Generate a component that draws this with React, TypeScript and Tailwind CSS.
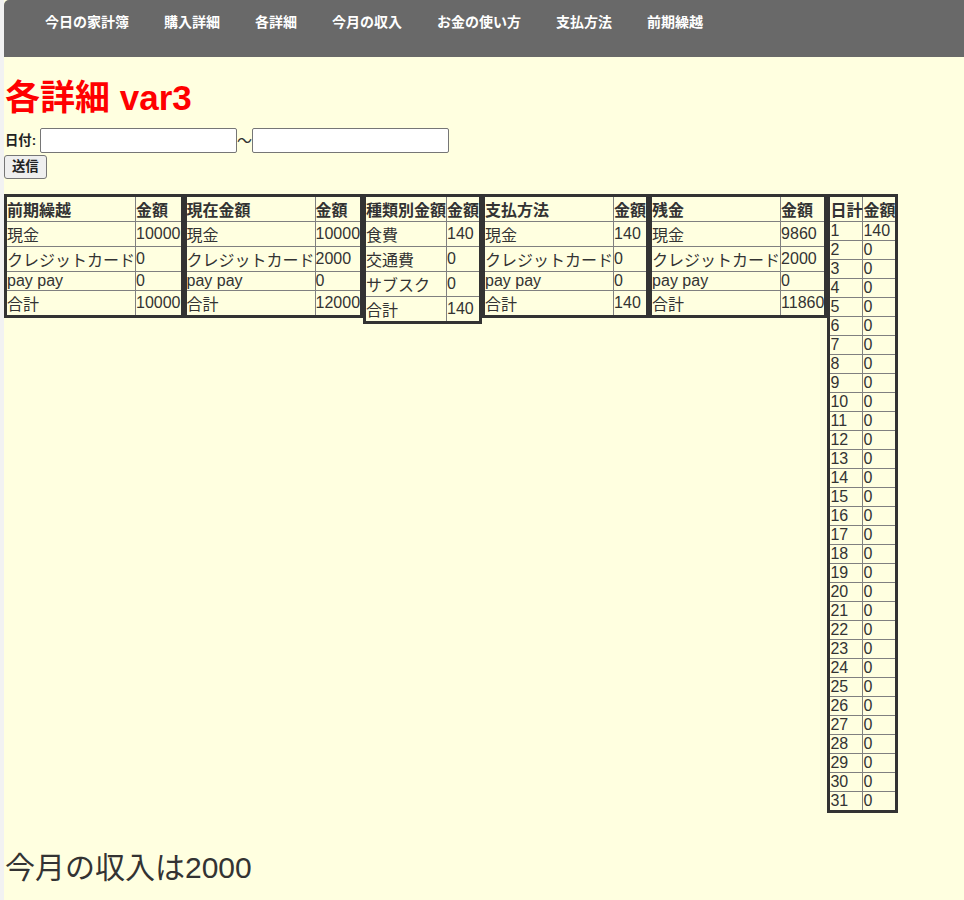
import * as React from "react";

type Row = [string, string];

interface SummaryTableProps {
  title: string;
  rows: Row[];
}

const navItems = [
  "今日の家計簿",
  "購入詳細",
  "各詳細",
  "今月の収入",
  "お金の使い方",
  "支払方法",
  "前期繰越",
];

const tables: SummaryTableProps[] = [
  {
    title: "前期繰越",
    rows: [
      ["現金", "10000"],
      ["クレジットカード", "0"],
      ["pay pay", "0"],
      ["合計", "10000"],
    ],
  },
  {
    title: "現在金額",
    rows: [
      ["現金", "10000"],
      ["クレジットカード", "2000"],
      ["pay pay", "0"],
      ["合計", "12000"],
    ],
  },
  {
    title: "種類別金額",
    rows: [
      ["食費", "140"],
      ["交通費", "0"],
      ["サブスク", "0"],
      ["合計", "140"],
    ],
  },
  {
    title: "支払方法",
    rows: [
      ["現金", "140"],
      ["クレジットカード", "0"],
      ["pay pay", "0"],
      ["合計", "140"],
    ],
  },
  {
    title: "残金",
    rows: [
      ["現金", "9860"],
      ["クレジットカード", "2000"],
      ["pay pay", "0"],
      ["合計", "11860"],
    ],
  },
];

const dailyRows: Row[] = Array.from({ length: 31 }, (_, i) => [
  String(i + 1),
  i === 0 ? "140" : "0",
]);

const cell = "border border-[#808080] p-0 text-left align-middle leading-[normal]";

const SummaryTable = ({ title, rows }: SummaryTableProps) => {
  return (
    <table className="border-collapse border-[3px] border-[#333] text-[16px] text-[#333]">
      <thead>
        <tr>
          <th className={`${cell} font-bold`}>{title}</th>
          <th className={`${cell} font-bold`}>金額</th>
        </tr>
      </thead>
      <tbody>
        {rows.map(([label, value]) => (
          <tr key={label}>
            <td className={cell}>{label}</td>
            <td className={cell}>{value}</td>
          </tr>
        ))}
      </tbody>
    </table>
  );
};

export default function App() {
  return (
    <div className="min-h-screen bg-[#f2f2f2] pl-[4px] font-['Liberation_Sans','Noto_Sans_CJK_JP',sans-serif]">
      <div className="min-h-screen bg-[#ffffe0]">
        <nav className="h-[57px] rounded-tl-[5px] bg-[#696969]">
          <ul className="flex gap-[35px] pl-[41px] pt-[12px]">
            {navItems.map((item) => (
              <li
                key={item}
                className="text-[14px] font-bold leading-[20px] text-white"
              >
                {item}
              </li>
            ))}
          </ul>
        </nav>

        <h1 className="mt-[21px] pl-[1px] text-[35px] font-bold leading-[40px] text-[#ff0000]">
          各詳細 var3
        </h1>

        <form className="mt-[10px] text-[13.33px] text-[#222]">
          <div className="flex items-center">
            <label className="pl-px pr-[4px] font-bold">日付:</label>
            <input
              type="text"
              className="h-[25px] w-[197px] rounded-[2px] border border-[#767676] bg-white"
            />
            <span className="w-[15px] text-center text-[15px] leading-[20px] text-[#333]">〜</span>
            <input
              type="text"
              className="h-[25px] w-[197px] rounded-[2px] border border-[#767676] bg-white"
            />
          </div>
          <button
            type="button"
            className="mt-[2px] h-[24px] rounded-[3px] border border-[#767676] bg-[#efefef] px-[7px] font-bold leading-none text-[#222]"
          >
            送信
          </button>
        </form>

        <div className="mt-[15px] flex items-start">
          {tables.map((t) => (
            <SummaryTable key={t.title} title={t.title} rows={t.rows} />
          ))}
          <table className="border-collapse border-[3px] border-[#333] text-[16px] text-[#333]">
            <thead>
              <tr>
                <th className={`${cell} font-bold`}>日計</th>
                <th className={`${cell} font-bold`}>金額</th>
              </tr>
            </thead>
            <tbody>
              {dailyRows.map(([day, value]) => (
                <tr key={day}>
                  <td className={cell}>{day}</td>
                  <td className={cell}>{value}</td>
                </tr>
              ))}
            </tbody>
          </table>
        </div>

        <h2 className="mt-[33px] pl-[1px] pb-[20px] text-[30px] leading-[44px] text-[#333]">
          今月の収入は2000
        </h2>
      </div>
    </div>
  );
}
